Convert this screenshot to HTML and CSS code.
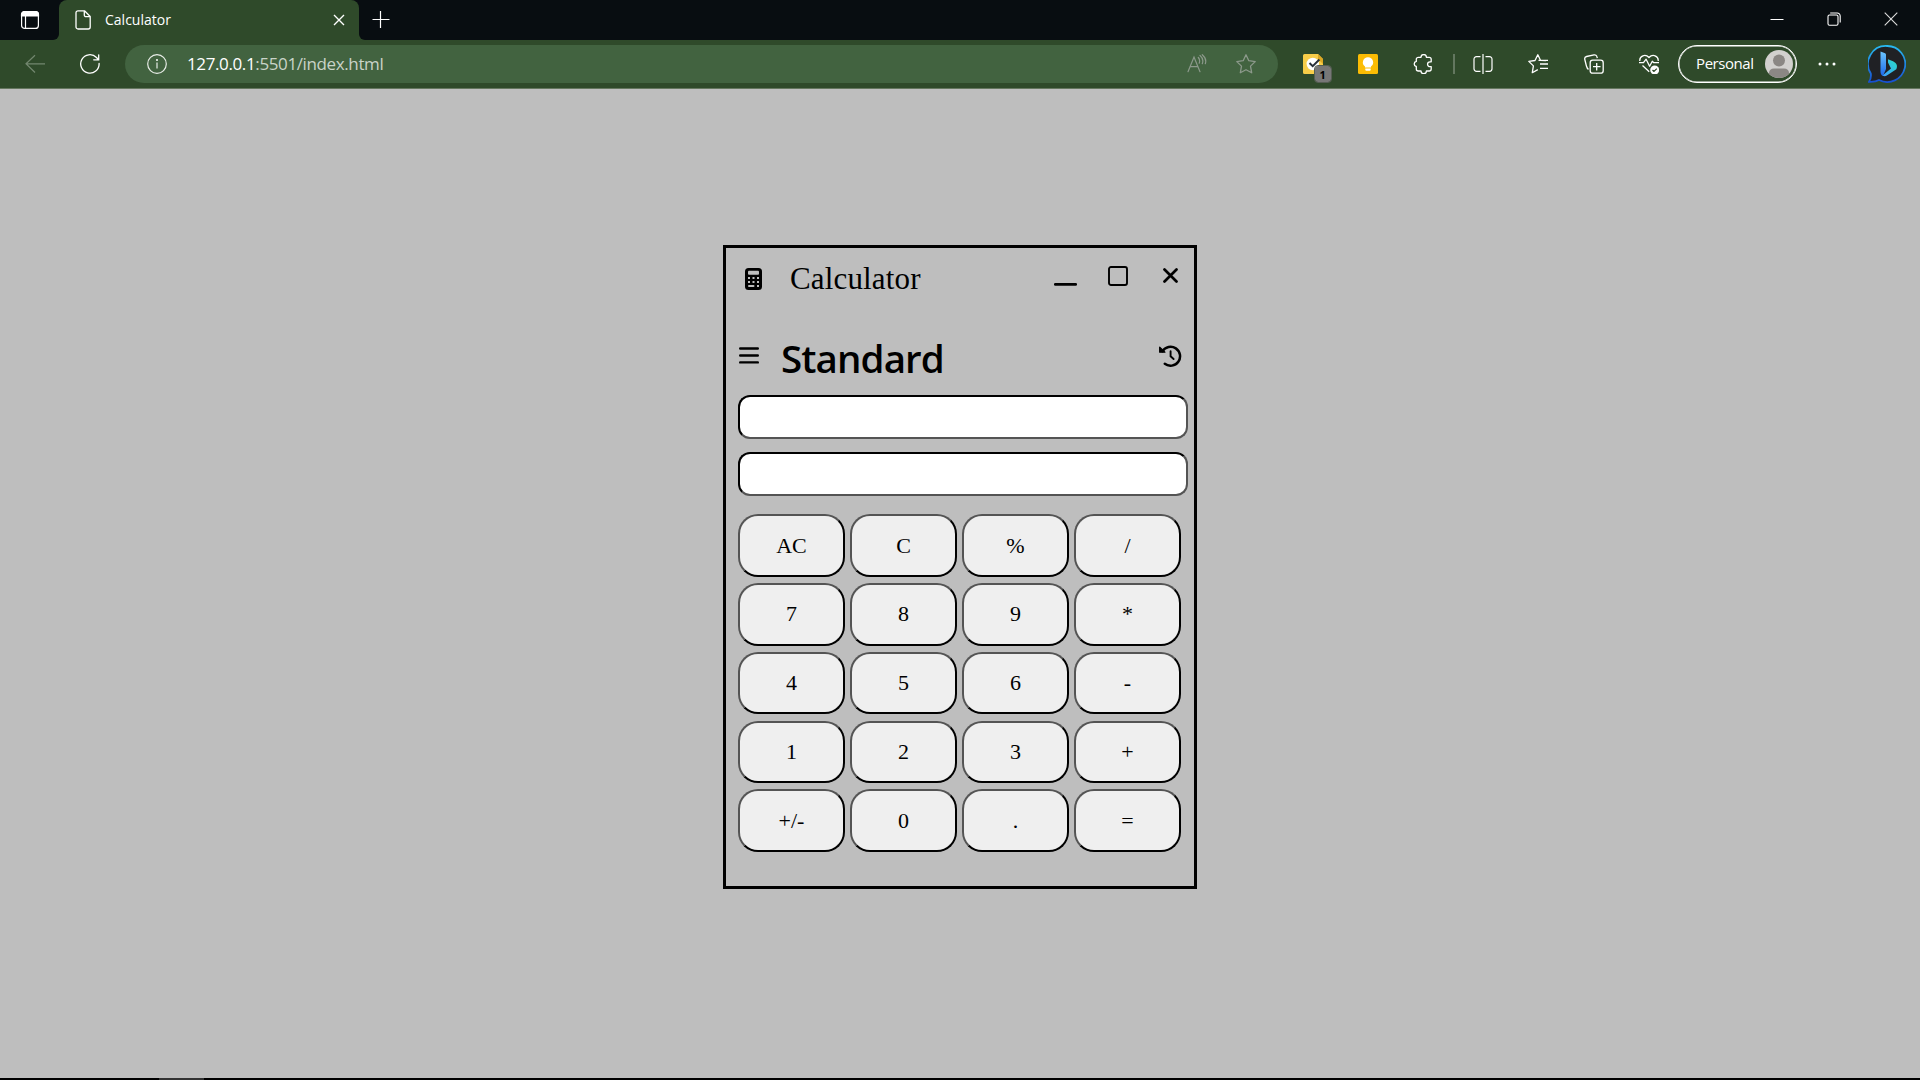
FILE: index.html
```html
<!DOCTYPE html>
<html lang="en">
<head>
<meta charset="utf-8">
<title>Calculator</title>
<link rel="stylesheet" href="styles.css">
</head>
<body>
<div class="browser">
  <header class="tabs">
    <div class="workspace">
      <svg width="20" height="20" viewBox="0 0 20 20" fill="none" stroke="#fff" stroke-width="1.2"><rect x="1.6" y="1.6" width="16.8" height="16.8" rx="3"/><path d="M1.5 6V4.5a3 3 0 0 1 3-3h11a3 3 0 0 1 3 3V6z" fill="#fff"/><path d="M5.5 6v12"/></svg>
    </div>
    <div class="tab">
      <svg class="tab-page" width="16" height="20" viewBox="0 0 16 20" fill="none" stroke="#fff" stroke-width="1.3" stroke-linejoin="round"><path d="M3 .8h6.500L15.200 6.500V17a2 2 0 0 1-2 2H3a2 2 0 0 1-2-2V2.800a2 2 0 0 1 2-2zM9.300 1v4a1.700 1.700 0 0 0 1.700 1.700h4"/></svg>
      <span class="tab-title">Calculator</span>
      <svg width="12" height="12" viewBox="0 0 12 12" stroke="#fff" stroke-width="1.4"><path d="M1 1l10 10M11 1L1 11"/></svg>
    </div>
    <svg class="tab-new" width="18" height="18" viewBox="0 0 18 18" stroke="#fff" stroke-width="1.2"><path d="M.5 8.500h17M8.500 0v17"/></svg>
    <div class="window-controls">
      <svg width="14" height="14" viewBox="0 0 14 14" stroke="#fff"><path d="M.5 7.500h13"/></svg>
      <svg width="14" height="14" viewBox="0 0 14 14" fill="none" stroke="#fff" stroke-width="1.1"><rect x="1" y="3" width="10" height="10.200" rx="1.500"/><path d="M3.200 1h7a3 3 0 0 1 3 3v6.500"/></svg>
      <svg width="14" height="14" viewBox="0 0 14 14" stroke="#ddd" stroke-width="1.100"><path d="M.7.7l12.600 12.600M13.300.7L.7 13.300"/></svg>
    </div>
  </header>

  <nav class="toolbar">
    <svg class="back" width="20" height="20" viewBox="0 0 20 20" fill="none" stroke="#73876f" stroke-width="1.200"><path d="M10 1.200L1 9.800l9 8.700M1 9.800h19"/></svg>
    <svg class="reload" width="20" height="20" viewBox="0 0 20 20" fill="none" stroke="#fff" stroke-width="1.300" stroke-linecap="round"><path d="M19.100 9.500a9.200 9.200 0 1 1-2.600-6l2 2.300M18.700.8v5h-5"/></svg>
    <div class="address">
      <svg class="info" width="20" height="20" viewBox="0 0 20 20" fill="none" stroke="#e8ede7" stroke-width="1.200"><circle cx="10" cy="10" r="9.300"/><path d="M10 8.500v6"/><circle cx="10" cy="6" r=".5" fill="#fff"/></svg>
      <span class="url"><b>127.0.0.1</b>:5501/index.html</span>
      <svg class="aloud" width="20" height="20" viewBox="0 0 20 20" fill="none" stroke="#8c998b" stroke-width="1.200" stroke-linecap="round"><path d="M1 17.700L7 3l6 14.700M3 12.700h8M11.300 3.500c1.400 1.700 1.700 3.700.9 5.700M13 1.500c2.700 2.200 3.400 5.300 2.300 8.200M15.300.7c3 2.600 4 6.200 3 9"/></svg>
      <svg width="20" height="20" viewBox="0 0 20 20" fill="none" stroke="#8c998b" stroke-width="1.300" stroke-linejoin="round"><path d="M10 .8l2.800 5.900 6.400.9-4.700 4.500 1.200 6.700-5.700-3.100-5.700 3.100 1.200-6.700L.8 7.600l6.400-.9z"/></svg>
    </div>
    <div class="extensions">
      <span class="slot">
        <span class="tasks">
          <svg width="20" height="20" viewBox="0 0 20 20"><path d="M1.500 0H15l5 5v13.500a1.500 1.500 0 0 1-1.500 1.500h-17A1.500 1.500 0 0 1 0 18.500v-17A1.500 1.500 0 0 1 1.500 0z" fill="#f8cd49"/><path d="M15 0l5 5v5l-5-5z" fill="#dda823"/><circle cx="9.800" cy="10" r="6.200" fill="#fff"/><path d="M6.500 9l3.200 3.200 6.700-6.700" fill="none" stroke="#273039" stroke-width="2"/></svg>
          <span class="count">1</span>
        </span>
      </span>
      <span class="slot"><svg width="20" height="20" viewBox="0 0 20 20"><rect width="20" height="20" rx="1.500" fill="#fbbc04"/><path d="M10 3.200a5.200 5.200 0 0 0-3 9.400v.9h6v-.9a5.200 5.200 0 0 0-3-9.400zM7.300 14.500h5.400v1.200a1 1 0 0 1-1 1H8.300a1 1 0 0 1-1-1z" fill="#fff"/></svg></span>
      <span class="slot"><svg width="20" height="20" viewBox="0 0 20 20" fill="none" stroke="#fff" stroke-width="1.300" stroke-linejoin="round"><path d="M5.300 3.300H8a2.700 2.700 0 0 1 5.400 0h2.800a2 2 0 0 1 2 2v2.500H17a2.400 2.400 0 0 0 0 4.900h1.200V15a2 2 0 0 1-2 2h-2.800A2.700 2.700 0 0 1 8 17H5.300a2 2 0 0 1-2-2v-2.500a2.600 2.600 0 0 1 0-5.100V5.300a2 2 0 0 1 2-2z"/></svg></span>
      <span class="divider"></span>
      <span class="slot"><svg width="20" height="20" viewBox="0 0 20 20" fill="none" stroke="#fff" stroke-width="1.200"><path d="M7.500 2.700h-4a2.500 2.500 0 0 0-2.500 2.500v9.600a2.500 2.500 0 0 0 2.500 2.500h4M12.500 2.700h4A2.500 2.500 0 0 1 19 5.200v9.600a2.500 2.500 0 0 1-2.500 2.500h-4M10 0v20"/></svg></span>
      <span class="slot"><svg width="20" height="20" viewBox="0 0 20 20" fill="none" stroke="#fff" stroke-width="1.300" stroke-linejoin="round"><path d="M18 6.500l-5.500-.2L9.800.8 7 6.500l-6.200.9 4.600 4.500-1.100 6.800 5.500-3.100M12 10h8M10.500 6.300H20M12 14.300h8"/></svg></span>
      <span class="slot"><svg width="20" height="20" viewBox="0 0 20 20" fill="none" stroke="#fff" stroke-width="1.300" stroke-linejoin="round"><rect x="6.200" y="6.200" width="13" height="13" rx="2.500"/><path d="M12.700 9v7.500M9 12.700h7.500M4.500 15.300C2.900 14.500 2.700 13 2.300 11.500L.8 5.500a2.500 2.500 0 0 1 1.800-3L10 .9a2.500 2.500 0 0 1 3 2l.3 1.200"/></svg></span>
      <span class="slot"><svg width="20" height="20" viewBox="0 0 20 20" fill="none" stroke="#fff" stroke-width="1.300" stroke-linejoin="round"><path d="M.8 7C.3 1.500 6.500-.3 10 3.500 13.500-.3 19.700 1.500 19.200 7M0 8.700h4.500l2.600-3.500 3.500 7 2.700-5 1.500 1.500H20M3.500 11.500l6.700 6.200"/><circle cx="15.700" cy="16" r="4.500" fill="#fff" stroke="none"/><path d="M13.500 16l1.500 1.400 2.800-2.800" stroke="#2f4a2a"/></svg></span>
    </div>
    <div class="profile">
      <span>Personal</span>
      <svg width="28" height="28" viewBox="0 0 28 28"><defs><clipPath id="avatar"><circle cx="14" cy="14" r="14"/></clipPath></defs><g clip-path="url(#avatar)"><path d="M0 0h28v28H0z" fill="#d2d0ce"/><circle cx="14" cy="10.500" r="6" fill="#8b8784"/><path d="M4 28v-5c0-3 2-4.500 5-4.500h10c3 0 5 1.500 5 4.500v5z" fill="#8b8784"/></g></svg>
    </div>
    <svg class="more" width="18" height="4" viewBox="0 0 18 4" fill="#fff"><circle cx="2" cy="2" r="1.500"/><circle cx="9" cy="2" r="1.500"/><circle cx="16" cy="2" r="1.500"/></svg>
    <svg class="assistant" width="38" height="38" viewBox="0 0 38 38"><defs><linearGradient id="ring" x1="0" y1="0" x2="0" y2="1"><stop stop-color="#28b9f0"/><stop offset="1" stop-color="#1750d0"/></linearGradient><linearGradient id="mark" x1="0" y1="0" x2="0" y2="1"><stop stop-color="#6bc5ff"/><stop offset="1" stop-color="#1c68e8"/></linearGradient><linearGradient id="tail" x1="1" y1="0" x2="0" y2="1"><stop stop-color="#27dcc5"/><stop offset="1" stop-color="#3f9dff"/></linearGradient></defs><path d="M19 1a18 18 0 1 1-8 34c-3 1.800-6 2-10 1.800 1.700-2.300 2.300-4.500 1.800-8.200A18 18 0 0 1 19 1z" fill="#202125" stroke="url(#ring)" stroke-width="1.800"/><path d="M12.500 6.500l4 1.600c1 .4 1.500 1 1.500 2V24l-3 7c-1.800-1-2.500-2.500-2.500-4.500z" fill="url(#mark)"/><path d="M20 14.300l5 2c3.500 1.500 5 4.500 3.300 8l-9.500 6.200c-1.500 1-3 .8-4.300 0l8.500-7-3-6z" fill="url(#tail)"/></svg>
  </nav>

  <main class="page">
    <section class="calculator">
      <div class="title-row">
        <svg class="calc-icon" width="17" height="22" viewBox="0 0 17 22"><rect width="17" height="22" rx="3.500"/><g fill="#bebebe"><rect x="3" y="2.800" width="11" height="4" rx="1"/><path d="M3 9h2v2H3zM7.500 9h2v2h-2zM12 9h2v2h-2zM3 13h2v2H3zM7.500 13h2v2h-2zM12 13h2v2h-2zM12 17h2v2h-2z"/><rect x="3" y="17" width="6.500" height="2" rx="1"/></g></svg>
        <span class="name">Calculator</span>
        <svg class="minimise" width="23" height="3" viewBox="0 0 23 3"><rect width="23" height="2.700" rx="1.300"/></svg>
        <svg class="maximise" width="20" height="20" viewBox="0 0 20 20" fill="none" stroke="#000" stroke-width="1.900"><rect x="1" y="1" width="18" height="18" rx="2"/></svg>
        <svg class="close" width="15" height="15" viewBox="0 0 15 15" stroke="#000" stroke-width="2.700" stroke-linecap="round"><path d="M1.500 1.500l12 12M13.500 1.500l-12 12"/></svg>
      </div>
      <div class="mode-row">
        <svg class="menu" width="20" height="17" viewBox="0 0 20 17" stroke="#000" stroke-width="2.400" stroke-linecap="round"><path d="M1.200 1.500h17.600M1.200 8.500h17.600M1.200 15.400h17.600"/></svg>
        <h1>Standard</h1>
        <svg class="history" width="23" height="22" viewBox="0 0 23 22" fill="none" stroke="#000" stroke-width="2.500" stroke-linecap="round"><path d="M3.500 6.200a9.500 9.500 0 1 1 2.300 12.600"/><path d="M11.600 6.300v5l3 2.700" stroke-width="1.900"/><path d="M.7 2.200v5h5.200z" fill="#000" stroke-width="1.300" stroke-linejoin="round"/></svg>
      </div>
      <input class="display" type="text" aria-label="Expression">
      <input class="display" type="text" aria-label="Result">
      <div class="keys">
        <button>AC</button><button>C</button><button>%</button><button>/</button>
        <button>7</button><button>8</button><button>9</button><button>*</button>
        <button>4</button><button>5</button><button>6</button><button>-</button>
        <button>1</button><button>2</button><button>3</button><button>+</button>
        <button>+/-</button><button>0</button><button>.</button><button>=</button>
      </div>
    </section>
  </main>
  <footer class="taskbar"><span></span></footer>
</div>
</body>
</html>
```
FILE: styles.css
```css
* { box-sizing: border-box; }
body { margin: 0; overflow: hidden; background: #bebebe; }
svg { display: block; flex: none; }
.browser { width: 1920px; height: 1080px; display: flex; flex-direction: column; font-family: "Open Sans", "Noto Sans", sans-serif; color: #fff; }

.tabs { height: 40px; flex: none; display: flex; background: linear-gradient(#080d11, #080d11) 0 0 / 100% 32px no-repeat, linear-gradient(90deg, #080d11 40px, #2f4a2a 40px 380px, #080d11 380px); }
.workspace { width: 59px; padding: 10px 0 0 20px; background: #080d11; border-bottom-right-radius: 6px; }
.tab { width: 300px; display: flex; align-items: center; padding: 0 14px 0 16px; background: #2f4a2a; border-radius: 8px 8px 0 0; }
.tab-title { flex: 1; margin-left: 14px; font-size: 14px; letter-spacing: 0; line-height: 38px; }
.tab-new { position: relative; z-index: 1; margin: 11px 0 0 13px; }
.tabs::after { content: ""; order: 1; flex: 1; margin-left: -31px; background: #080d11; border-bottom-left-radius: 6px; }
.window-controls { order: 2; display: flex; gap: 43px; padding: 12px 22px 0 0; background: #080d11; }

.toolbar { height: 49px; flex: none; display: flex; align-items: center; background: #2f4a2a; border-bottom: 1px solid #65775f; }
.back { margin-left: 25px; }
.reload { margin-left: 35px; }
.address { width: 1153px; height: 38px; margin-left: 25px; display: flex; align-items: center; padding: 0 22px; border-radius: 19px; background: #426340; }
.url { flex: 1; margin-left: 20px; font-size: 17px; letter-spacing: -.38px; line-height: 36px; color: #c9d3c8; }
.url b { font-weight: 400; color: #fff; }
.aloud { margin-right: 29px; }
.extensions { display: flex; align-items: center; margin-left: 7px; }
.slot { width: 55.300px; display: flex; justify-content: center; }
.divider ~ .slot { padding-left: 1px; }
.tasks { position: relative; }
.count { position: absolute; left: 12px; top: 12px; width: 16px; height: 16px; border-radius: 3px; outline: 1px solid #565e54; background: #777; color: #000; font: 700 11px/17px "Open Sans", sans-serif; text-align: center; }
.divider { width: 2px; height: 20px; margin: 0 0 0 2px; background: #63775f; }
.profile { width: 119px; height: 38px; margin-left: 2px; display: flex; align-items: center; justify-content: space-between; padding: 0 3px 0 17px; border: 1.500px solid #fff; box-shadow: inset 0 0 0 .5px #fff; border-radius: 19px; font-size: 15px; letter-spacing: -.45px; line-height: 34px; }
.profile span { margin-top: -2px; }
.more { margin-left: 21px; }
.assistant { margin-left: 32px; }

.page { flex: 1; display: flex; justify-content: center; align-items: flex-start; padding-top: 156px; background: #bebebe; color: #000; }
.calculator { width: 474px; height: 644px; border: 3px solid #000; padding: 0 6px 0 12px; }
.title-row { height: 70px; display: flex; align-items: flex-start; padding-left: 7px; }
.calc-icon { margin-top: 20px; }
.name { width: 134px; margin: 13px 0 0 28px; font: 31px/36px "Liberation Serif", serif; letter-spacing: .15px; }
.minimise { margin: 35px 0 0 130px; }
.maximise { margin: 18px 0 0 31px; }
.close { margin: 20px 0 0 35px; }
.mode-row { height: 77px; display: flex; align-items: flex-start; }
.menu { margin: 29px 0 0 1px; }
h1 { flex: 1; margin: 14px 0 0 22px; font: 600 38.500px/52px "Open Sans", sans-serif; letter-spacing: -.9px; }
.history { margin: 27px 6px 0 0; }
.display { display: block; width: 450px; height: 44px; margin: 0 0 13px; border: 2px inset #000; border-radius: 12px; background: #fff; }
.keys { display: grid; grid-template-columns: repeat(4, 107px); grid-auto-rows: 62.500px; gap: 6.250px 5px; padding-top: 5.250px; }
.keys button { padding: 0; border: 2px outset #000; border-radius: 20px; background: #efefef; color: #000; font: 22px "Liberation Serif", serif; }
.taskbar { height: 2px; flex: none; background: #000; }
.taskbar span { display: block; width: 45px; height: 2px; margin-left: 159px; background: #333; }
```
